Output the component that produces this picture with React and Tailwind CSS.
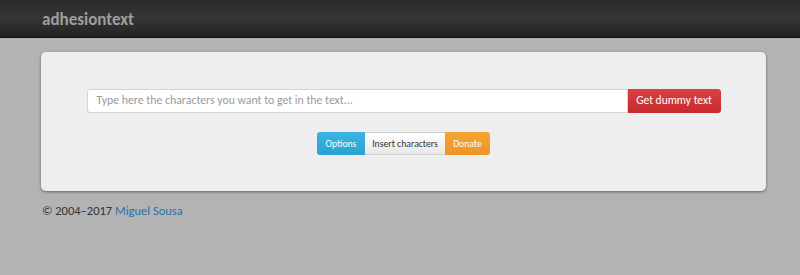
export default function App() {
  return (
    <div className="min-h-[275px] w-full bg-[#b3b3b3] whitespace-nowrap" style={{ fontFamily: 'Carlito, Lato, "Noto Sans", sans-serif' }}>
      <div className="h-[38px] w-full border-b border-[#111] bg-gradient-to-b from-[#2b2b2b] via-[#353535] to-[#222] flex items-center">
        <div className="pl-[42px] pt-[1px] text-[17px] font-bold text-[#9e9e9e] leading-none">adhesiontext</div>
      </div>
      <div className="px-[41px] pt-[14px]">
        <div className="w-[725px] h-[139px] rounded-[5px] bg-[#eeeeee] shadow-[0_1px_3px_rgba(0,0,0,0.45)] flex flex-col items-center pt-[37px]">
          <div className="flex w-[634px] h-[24px]">
            <div className="flex-1 h-full bg-white border border-[#d4d4d4] rounded-l-[3px] flex items-center pl-[9px] text-[11.8px] text-[#9a9a9a]">
              Type here the characters you want to get in the text...
            </div>
            <div className="w-[93px] h-full bg-gradient-to-b from-[#da4143] to-[#c6292c] rounded-r-[3px] flex items-center justify-center text-[11.5px] text-white">
              Get dummy text
            </div>
          </div>
          <div className="flex mt-[19px] h-[23px] text-[9.7px]">
            <div className="w-[48px] h-full bg-gradient-to-b from-[#3bb4e0] to-[#2aa2d2] rounded-l-[3px] flex items-center justify-center pt-[1px] text-white">Options</div>
            <div className="w-[80px] h-full bg-gradient-to-b from-[#ffffff] to-[#e8e8e8] border-y border-[#cfcfcf] flex items-center justify-center pt-[1px] text-[#333]">Insert characters</div>
            <div className="w-[45px] h-full bg-gradient-to-b from-[#f5a535] to-[#ee9424] rounded-r-[3px] flex items-center justify-center pt-[1px] text-white">Donate</div>
          </div>
        </div>
        <div className="pt-[11px] pl-[1px] text-[12.5px] text-[#333]">
          © 2004–2017 <span className="text-[#2f6fb0]">Miguel Sousa</span>
        </div>
      </div>
    </div>
  );
}
